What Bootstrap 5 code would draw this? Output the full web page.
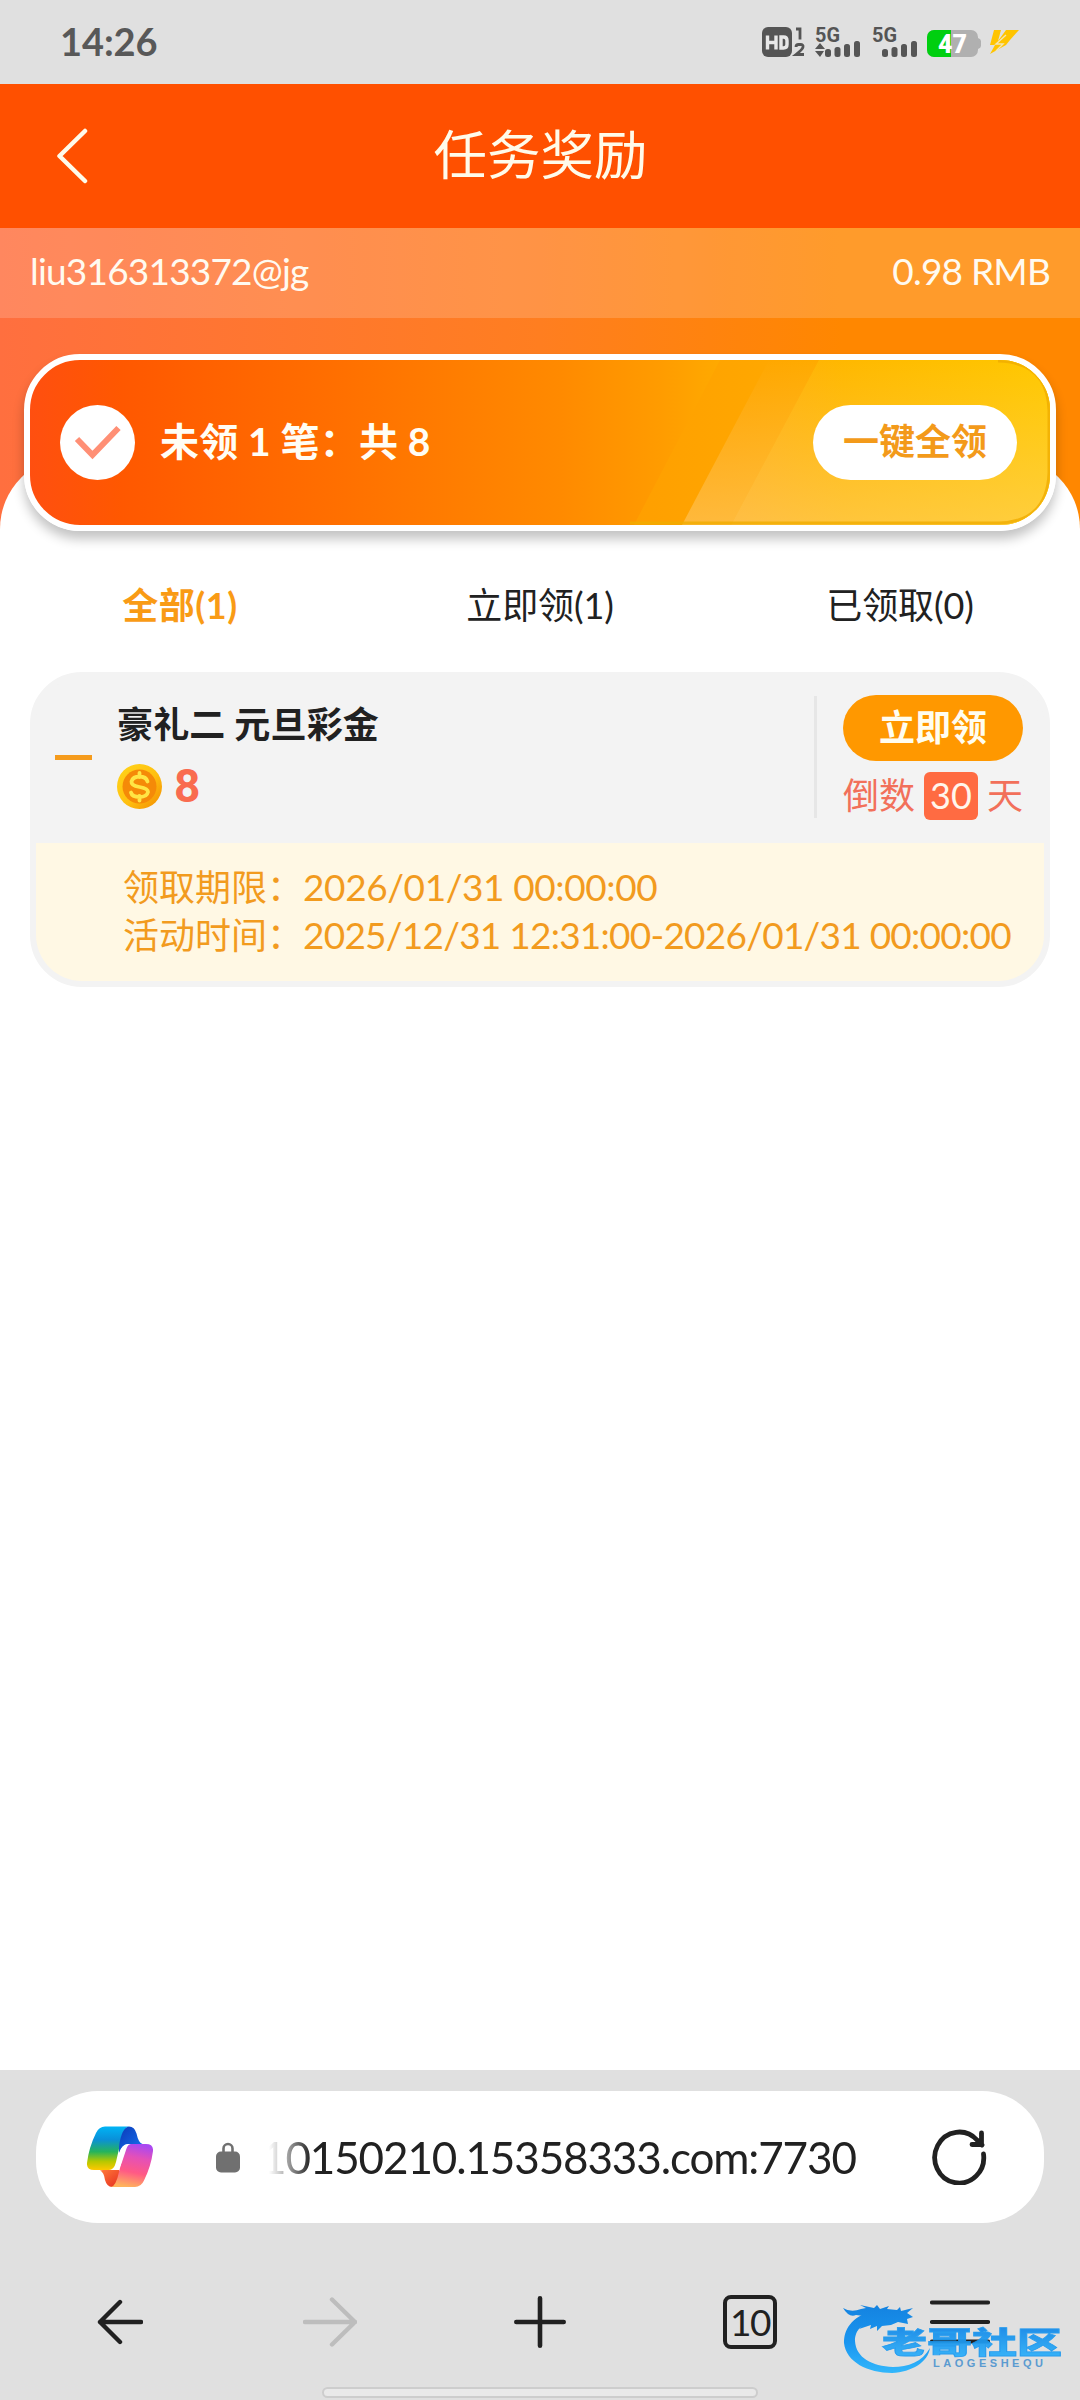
<!DOCTYPE html>
<html lang="zh-CN">
<head>
    <meta charset="UTF-8">
    <meta name="viewport" content="width=device-width, initial-scale=1.0">
    <title>任务奖励</title>
    <link href="https://cdn.jsdelivr.net/npm/bootstrap@5.3.0/dist/css/bootstrap.min.css" rel="stylesheet">
    <style>
        body {
            width: 1080px;
            height: 2400px;
            background-color: #fff;
            color: #212121;
            font-family: Lato, "Noto Sans CJK SC", sans-serif;
            font-size: 36px;
            line-height: 48px;
            overflow: hidden;
        }
        svg {
            display: block;
            flex-shrink: 0;
        }

        /* Status bar */
        .status-bar {
            height: 84px;
            padding: 0 60px 0 60px;
            background-color: #e0e0e0;
            color: #585858;
        }
        .status-time {
            padding-bottom: 2px;
            font-size: 38px;
            font-weight: 700;
            letter-spacing: -.1px;
        }

        /* Title bar */
        .title-bar {
            height: 144px;
            padding: 0 56px;
            background-color: #ff5000;
            color: #fffbea;
        }
        .title-text {
            margin: 0;
            padding-bottom: 4px;
            font-size: 53.5px;
            line-height: 72px;
            font-weight: 400;
        }

        /* Account strip and banner */
        .hero-area {
            height: 303px;
            background: linear-gradient(90deg, #ff6f3f 0%, #ff7e20 50%, #ff8700 78%, #ff8700 100%);
        }
        .account-strip {
            height: 90px;
            padding: 0 30px 4px;
            background-color: rgba(255, 255, 255, .17);
            color: #fffaf0;
            font-size: 37px;
            letter-spacing: -.8px;
        }
        .hero-sheet {
            height: 75px;
            margin-top: 138px;
            background-color: #fff;
            border-radius: 73px 73px 0 0;
        }
        .claim-banner {
            height: 177px;
            margin: -177px 24px 0;
            padding: 0 33px 0 30px;
            border: 6px solid #fff;
            border-radius: 56px;
            background: linear-gradient(90deg, #ff4f10 0%, #ff5800 9%, #ff6f00 30%, #ff8a00 52%, #ff9c00 62%, #ffb400 72%, #ffc800 100%);
            box-shadow: 0 8px 12px rgba(0, 0, 0, .24);
            overflow: hidden;
        }
        .banner-stripes {
            position: absolute;
            right: 0;
            top: 0;
        }
        .banner-text {
            padding: 0 0 3px 25px;
            font-size: 39px;
            font-weight: 700;
            letter-spacing: .2px;
            color: #fffdf5;
        }
        .btn-claim-all {
            width: 204px;
            height: 75px;
            background-color: #fff;
            color: #f39a1a;
            font-size: 36px;
            font-weight: 700;
        }
        .btn-claim-all span,
        .btn-claim span {
            display: block;
            padding-bottom: 3px;
        }

        /* Tabs */
        .reward-tabs {
            height: 141px;
            padding-top: 50px;
        }
        .reward-tabs .nav-link {
            padding: 0;
            color: #212121;
            letter-spacing: -.1px;
        }
        .reward-tabs .nav-link.active {
            color: #f99b15;
            font-weight: 700;
            letter-spacing: .6px;
        }

        /* Reward card */
        .reward-card {
            height: 315px;
            margin: 0 30px;
            border: 6px solid #f3f3f3;
            border-radius: 52px;
            background-color: #f3f3f3;
            overflow: hidden;
        }
        .reward-head {
            height: 165px;
        }
        .fold-dash {
            width: 37px;
            height: 5px;
            margin: 77px 25px 0 19px;
            background-color: #f59b1c;
        }
        .reward-name {
            margin: 0;
            padding-top: 22px;
            font-size: 36px;
            line-height: 48px;
            font-weight: 700;
            letter-spacing: .15px;
        }
        .reward-amount {
            gap: 12px;
            margin-top: 14px;
            font-size: 46px;
            line-height: 48px;
            font-weight: 700;
            color: #f96b4f;
            font-family: Roboto, sans-serif;
        }
        .reward-side {
            width: 230px;
            height: 122px;
            margin-top: 18px;
            padding-left: 26px;
            border-left: 3px solid #e6e6e6;
        }
        .btn-claim {
            width: 180px;
            height: 66px;
            margin-top: -1px;
            background-color: #ff9800;
            color: #fffdf0;
            font-size: 36px;
            font-weight: 700;
        }
        .countdown {
            width: 180px;
            margin-top: 10px;
            color: #f2705a;
        }
        .countdown-label {
            padding-bottom: 2px;
        }
        .days-left {
            width: 54px;
            height: 48px;
            line-height: 46px;
            border-radius: 6px;
            background-color: #ff6b42;
            color: #fff6ec;
        }
        .reward-detail {
            height: 138px;
            padding: 20px 0 0 87px;
            background-color: #fff8e4;
            color: #f29b1e;
            white-space: nowrap;
        }
        .detail-date {
            font-size: 37px;
            letter-spacing: -.4px;
        }
        .detail-range {
            letter-spacing: -.76px;
        }

        /* Browser bars */
        .browser-bar {
            height: 330px;
            padding-top: 21px;
            background-color: #e0e0e0;
        }
        .address-pill {
            height: 132px;
            margin: 0 36px;
            padding: 0 57px 0 51px;
            border-radius: 62px;
            background-color: #fff;
        }
        .lock-icon {
            margin-left: 63px;
        }
        .address-url {
            margin-left: 21px;
            font-size: 44px;
            line-height: 60px;
            letter-spacing: -1.12px;
            color: #212121;
            white-space: nowrap;
            -webkit-mask-image: linear-gradient(90deg, transparent 8px, rgba(0, 0, 0, .25) 20px, #000 50px);
            mask-image: linear-gradient(90deg, transparent 8px, rgba(0, 0, 0, .25) 20px, #000 50px);
        }
        .browser-nav {
            height: 198px;
            padding: 0 15px;
        }
        .tab-count {
            width: 54px;
            height: 54px;
            border: 4px solid #212121;
            border-radius: 8px;
            font-size: 37px;
            letter-spacing: -1.5px;
        }
        .community-logo {
            position: absolute;
            right: 12px;
            bottom: 20px;
        }
        .home-handle {
            position: absolute;
            left: 322px;
            bottom: 2px;
            width: 436px;
            height: 11px;
            border: 2px solid #cdcdcd;
            border-radius: 6px;
            background-color: #e9e9e9;
        }
    </style>
</head>
<body class="d-flex flex-column">
    <!-- Status bar -->
    <div class="status-bar d-flex align-items-center justify-content-between">
        <span class="status-time">14:26</span>
        <svg width="258" height="84" viewBox="762 0 258 84" fill="#555">
            <rect x="762" y="27" width="30" height="30" rx="6"/>
            <path d="M767.500 35.500v14M776 35.500v14M767.500 42.500h9M781 37v11h2.500q3.500 0 3.500-3.500v-4q0-3.500-3.500-3.500z" fill="none" stroke="#e8e8e8" stroke-width="3.400"/>
            <path d="M796 29h4v10.500M796 47q0-2.500 2.500-2.500h2q3 0 2.500 2.500t-7 7.500h8" fill="none" stroke="#555" stroke-width="2.800"/>
            <g id="signal">
                <text x="815" y="42" font-family="Roboto, sans-serif" font-size="20.500" font-weight="700" textLength="25" lengthAdjust="spacingAndGlyphs">5G</text>
                <rect x="825" y="49" width="6" height="8" rx="2.500"/>
                <rect x="834.500" y="47" width="6" height="10" rx="2.500"/>
                <rect x="844" y="44" width="6" height="13" rx="2.500"/>
                <rect x="854" y="41" width="6" height="16" rx="2.500"/>
            </g>
            <use href="#signal" x="57"/>
            <path d="M815 49l5-6 5 6zM815 51h9l-4 6z"/>
            <rect x="927" y="30" width="51" height="27" rx="7" fill="#b0b0b0"/>
            <path d="M934 30h17v27h-17a7 7 0 0 1-7-7V37a7 7 0 0 1 7-7z" fill="#00cf10"/>
            <path d="M978 38q3 1 3 3v5q0 2-3 3z" fill="#b0b0b0"/>
            <text x="938" y="53" font-family="Roboto, sans-serif" font-size="25" font-weight="900" fill="#fff" textLength="29" lengthAdjust="spacingAndGlyphs">47</text>
            <path d="M994 30h7l-3 11 8-11h13l-9 10-4 5-16 9 5-9h-5z" fill="#ffc400"/>
            <path d="M1006 35l-10 9h7l-7 7" fill="none" stroke="#f4e6b4" stroke-width="1.400"/>
        </svg>
    </div>

    <!-- Title bar -->
    <header class="title-bar d-flex align-items-center justify-content-between">
        <svg width="33" height="56" viewBox="0 0 33 56" fill="none" stroke="#fffbea" stroke-width="4.500" stroke-linecap="round" stroke-linejoin="round">
            <path d="M29 3L3.500 28 29 53"/>
        </svg>
        <h1 class="title-text">任务奖励</h1>
        <span class="px-3"></span>
    </header>

    <!-- Account strip and banner -->
    <section class="hero-area">
        <div class="account-strip d-flex align-items-center justify-content-between">
            <span>liu316313372@jg</span>
            <span>0.98 RMB</span>
        </div>
        <div class="hero-sheet"></div>
        <div class="claim-banner position-relative d-flex align-items-center">
            <svg class="banner-stripes" width="420" height="165" viewBox="630 360 420 165">
                <defs>
                    <linearGradient id="glow" x1="0" y1="0" x2="0" y2="1">
                        <stop offset="0" stop-color="#ffd890" stop-opacity="0"/>
                        <stop offset="1" stop-color="#ffd890" stop-opacity=".42"/>
                    </linearGradient>
                    <linearGradient id="gold" x1="0" y1="0" x2="1" y2="0">
                        <stop offset="0" stop-color="#ffac10"/>
                        <stop offset=".35" stop-color="#ffb800"/>
                        <stop offset="1" stop-color="#ffc800"/>
                    </linearGradient>
                    <linearGradient id="amber" x1="0" y1="0" x2="1" y2="0">
                        <stop offset="0" stop-color="#ff9f00"/>
                        <stop offset=".5" stop-color="#ffac00"/>
                        <stop offset="1" stop-color="#ffc000"/>
                    </linearGradient>
                </defs>
                <path d="M720 360h330v165H634z" fill="url(#amber)"/>
                <path d="M769 360h281v165H682z" fill="url(#glow)"/>
                <path d="M819 360h231v165H731z" fill="url(#gold)"/>
                <path d="M819 360h231v165H731z" fill="url(#glow)"/>
                <path d="M998 361q50 1 51 50v62q-2 49-50 50H630" fill="none" stroke="#f0ac00" stroke-width="3" opacity=".8"/>
            </svg>
            <svg width="75" height="75" viewBox="0 0 75 75">
                <circle cx="37.500" cy="37.500" r="37.500" fill="#fff"/>
                <path d="M17 34l15.500 16L58.500 23" fill="none" stroke="#ff8f75" stroke-width="6"/>
            </svg>
            <span class="banner-text">未领 1 笔：共 8</span>
            <button class="btn-claim-all btn rounded-pill border-0 p-0 ms-auto position-relative"><span>一键全领</span></button>
        </div>
    </section>

    <!-- Tabs -->
    <ul class="reward-tabs nav nav-fill flex-nowrap">
        <li class="nav-item w-100"><a class="nav-link active" href="#">全部(1)</a></li>
        <li class="nav-item w-100"><a class="nav-link" href="#">立即领(1)</a></li>
        <li class="nav-item w-100"><a class="nav-link" href="#">已领取(0)</a></li>
    </ul>

    <!-- Reward card -->
    <article class="reward-card">
        <div class="reward-head d-flex">
            <div class="fold-dash"></div>
            <div>
                <h2 class="reward-name">豪礼二 元旦彩金</h2>
                <div class="reward-amount d-flex align-items-center">
                    <svg width="45" height="45" viewBox="0 0 45 45">
                        <defs>
                            <linearGradient id="coinRim" x1="0" y1="0" x2="1" y2="1">
                                <stop offset="0" stop-color="#ffd51a"/>
                                <stop offset=".55" stop-color="#ffc010"/>
                                <stop offset="1" stop-color="#f28a00"/>
                            </linearGradient>
                        </defs>
                        <circle cx="22.500" cy="22.500" r="22.500" fill="url(#coinRim)"/>
                        <circle cx="22.500" cy="22.500" r="17" fill="#f58a08"/>
                        <path d="M22.500 9v4M22.500 32v4.500M30.500 17.500q-1.500-5-8-5t-8 5q-.5 4 8 5.500t8.500 5q-1 5-8.500 5t-8.500-4.500" fill="none" stroke="#ffe545" stroke-width="3.800" stroke-linecap="round"/>
                    </svg>
                    <span>8</span>
                </div>
            </div>
            <div class="reward-side ms-auto">
                <button class="btn-claim btn rounded-pill border-0 p-0 d-block"><span>立即领</span></button>
                <div class="countdown d-flex align-items-center justify-content-between">
                    <span class="countdown-label">倒数</span>
                    <span class="days-left text-center">30</span>
                    <span class="countdown-label">天</span>
                </div>
            </div>
        </div>
        <div class="reward-detail">
            <div>领取期限：<span class="detail-date">2026/01/31 00:00:00</span></div>
            <div>活动时间：<span class="detail-date detail-range">2025/12/31 12:31:00-2026/01/31 00:00:00</span></div>
        </div>
    </article>

    <!-- Browser bars -->
    <footer class="browser-bar position-relative mt-auto">
        <div class="address-pill d-flex align-items-center">
            <svg width="66" height="62" viewBox="0 0 66 62">
                <defs>
                    <linearGradient id="ribbonLeft" x1="0" y1="0" x2="0" y2="1">
                        <stop offset="0" stop-color="#00b4f5"/>
                        <stop offset=".3" stop-color="#0a90d8"/>
                        <stop offset=".58" stop-color="#25b45c"/>
                        <stop offset=".8" stop-color="#b5c800"/>
                        <stop offset="1" stop-color="#ffc800"/>
                    </linearGradient>
                    <linearGradient id="ribbonRight" x1=".6" y1="0" x2=".4" y2="1">
                        <stop offset="0" stop-color="#a948f2"/>
                        <stop offset=".3" stop-color="#e450b8"/>
                        <stop offset=".65" stop-color="#ff5a85"/>
                        <stop offset="1" stop-color="#ffb45c"/>
                    </linearGradient>
                    <linearGradient id="foldTop" x1="0" y1="0" x2="1" y2="1">
                        <stop offset="0" stop-color="#0b3bb8"/>
                        <stop offset="1" stop-color="#1672f0"/>
                    </linearGradient>
                    <linearGradient id="foldBottom" x1="0" y1="0" x2="1" y2="1">
                        <stop offset="0" stop-color="#ff7a38"/>
                        <stop offset="1" stop-color="#e52a20"/>
                    </linearGradient>
                </defs>
                <path d="M16 44h16l3 4q-3 12-10 13-5 0-7-7-1-8-5-9.500z" fill="url(#foldBottom)"/>
                <path d="M42 .5H18Q12 .5 9 7 2 21 0 37q-.5 7 7 7h15q5 0 7-8l5-22Q37 1 42 .5z" fill="url(#ribbonLeft)"/>
                <path d="M32 20q3-19 10-19.500 5.500 0 7.500 7 2 9.500 6 10.500H41q-6 0-9 9z" fill="url(#foldTop)"/>
                <path d="M24 61h24q6 0 9-6.500 7-14 9-29.500.5-7-7-7H44q-4.500 0-7 8l-5 20q-3 14-8 15z" fill="url(#ribbonRight)"/>
                <path d="M24 44q4-1 6-8l2.500-9q2.500-9 10.500-9-2.500 1-4 6l-4 12q-2.500 8-6.500 8z" fill="#fff"/>
            </svg>
            <svg class="lock-icon" width="24" height="31" viewBox="0 0 24 31">
                <rect y="9.500" width="24" height="21" rx="5" fill="#707070"/>
                <path d="M7.500 11V6.500a4.500 4.500 0 0 1 9 0V11" fill="none" stroke="#707070" stroke-width="2.600"/>
            </svg>
            <span class="address-url">10150210.15358333.com:7730</span>
            <svg class="ms-auto" width="55" height="56" viewBox="0 0 55 56" fill="none" stroke="#212121" stroke-width="4.800" stroke-linecap="round" stroke-linejoin="round">
                <path d="M51.500 25A24.500 25.500 0 1 1 45 11l5 5M49.500 4v11.500H40"/>
            </svg>
        </div>
        <nav class="browser-nav d-flex align-items-center">
            <div class="col d-flex justify-content-center">
                <svg width="46" height="46" viewBox="0 0 46 46" fill="none" stroke="#212121" stroke-width="4.400" stroke-linecap="round" stroke-linejoin="round">
                    <path d="M44 23H3M23 3L3 23l20 20"/>
                </svg>
            </div>
            <div class="col d-flex justify-content-center">
                <svg width="54" height="50" viewBox="0 0 54 50" fill="none" stroke="#bdbdbd" stroke-width="4.400" stroke-linecap="round" stroke-linejoin="round">
                    <path d="M2 25h50M29 2.500L52 25 29 47.500"/>
                </svg>
            </div>
            <div class="col d-flex justify-content-center">
                <svg width="52" height="52" viewBox="0 0 52 52" stroke="#212121" stroke-width="4.600" stroke-linecap="round">
                    <path d="M2.300 26h47.400M26 2.300v47.400"/>
                </svg>
            </div>
            <div class="col d-flex justify-content-center">
                <span class="tab-count d-flex align-items-center justify-content-center">10</span>
            </div>
            <div class="col d-flex justify-content-center">
                <svg width="60" height="44" viewBox="0 0 60 44" stroke="#212121" stroke-width="4.200" stroke-linecap="round">
                    <path d="M2 2.500h56M2 22h56M2 41.500h56"/>
                </svg>
            </div>
        </nav>
        <svg class="community-logo" width="226" height="80" viewBox="842 2300 226 80">
            <defs>
                <linearGradient id="wave" gradientUnits="userSpaceOnUse" x1="0" y1="2305" x2="0" y2="2374">
                    <stop offset="0" stop-color="#1483e0"/>
                    <stop offset=".55" stop-color="#1a96f0"/>
                    <stop offset="1" stop-color="#33b8fc"/>
                </linearGradient>
                <linearGradient id="waveText" x1="0" y1="0" x2="0" y2="1">
                    <stop offset=".1" stop-color="#0f82e6"/>
                    <stop offset=".9" stop-color="#2bb0fa"/>
                </linearGradient>
            </defs>
            <path d="M873 2310C850 2318 844 2330 844 2343 846 2362 868 2373 892 2373 912 2372 928 2362 930 2348 922 2362 908 2367 893 2367 872 2366 856 2358 855 2341 855 2330 862 2322 882 2318z" fill="url(#wave)"/>
            <path d="M843 2308q8 5 18 1l5-1-6-3 14 3 3-3 3 4 9-3-2 3 10 1 3-3 1 4 12-3-6 5 6 4-6 2 1 5-10-2-7 3-9 1-5 5v-5l-7 3 1-4-12 4 4-5-9 3q2-9 10-11l-8-1q-7 3-13-7z" fill="url(#wave)"/>
            <text transform="translate(882 2353) scale(1.500 1)" font-family="Noto Sans CJK SC, sans-serif" font-size="30" font-weight="900" fill="url(#waveText)" stroke="#1a98f0" stroke-width=".8" opacity=".93">老哥社区</text>
            <text x="933" y="2367" font-family="Liberation Sans, sans-serif" font-size="11" font-weight="700" fill="#5b9bd0" textLength="110">LAOGESHEQU</text>
        </svg>
        <div class="home-handle"></div>
    </footer>

    <script src="https://cdn.jsdelivr.net/npm/bootstrap@5.3.0/dist/js/bootstrap.bundle.min.js"></script>
</body>
</html>
